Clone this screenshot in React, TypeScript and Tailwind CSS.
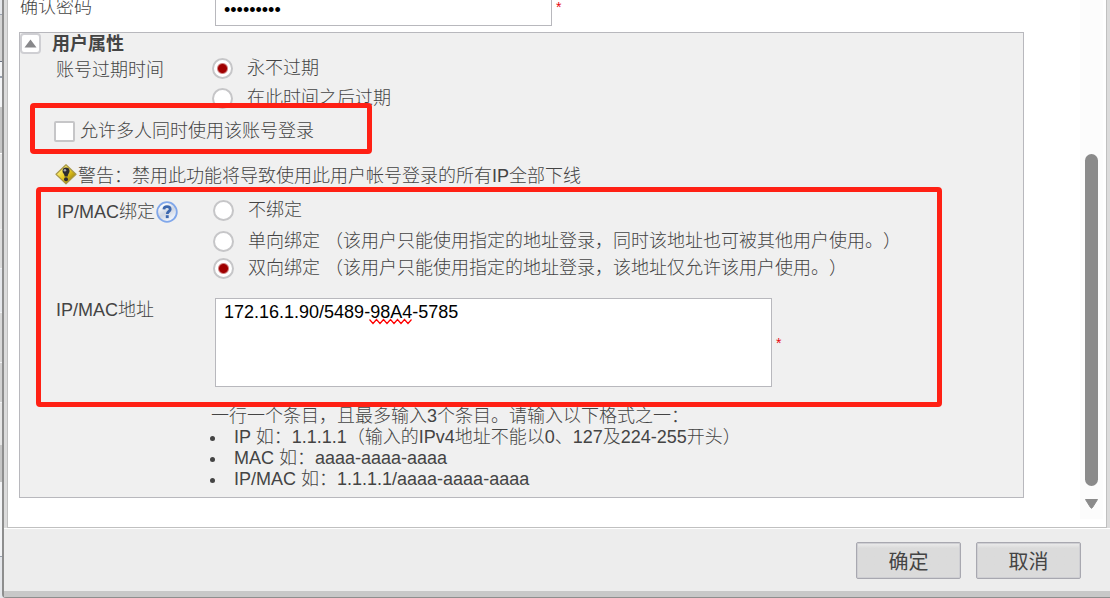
import { ReactNode } from "react";

const backdropRows = [
  "h-[14px] bg-gray-200",
  "h-[47px] bg-[#d4d4d4] border-t border-gray-400",
  "h-[15px] bg-gray-100 border-t border-gray-500",
  "h-[31px] bg-gray-100 border-t-2 border-gray-400",
  "h-[46px] bg-[#c6c6c6]",
  "h-[76px] bg-[#e6e6e6] border-t border-white",
  "h-[39px] bg-[#dcdcdc] border-t border-gray-100",
  "h-[44px] bg-gray-200 border-t border-gray-100",
  "h-[50px] bg-[#d8d8d8] border-t border-gray-100",
  "h-[40px] bg-[#d2d2d2] border-t border-gray-100",
  "h-[43px] bg-[#e6e6e6] border-t border-gray-100",
  "h-[37px] bg-[#c6c6c6]",
  "h-[75px] bg-gray-100 border-b border-gray-400",
];

function Choice({
  name,
  children,
  checked = false,
}: {
  name: string;
  children: ReactNode;
  checked?: boolean;
}) {
  return (
    <label className="flex items-center gap-3.5">
      <input
        type="radio"
        name={name}
        defaultChecked={checked}
        className="size-[21px] shrink-0 appearance-none rounded-full border-2 border-[#c6c6c8] bg-white checked:bg-[radial-gradient(circle,#a00000_4px,#ffffff_6px)]"
      />
      <span>{children}</span>
    </label>
  );
}

function WarningIcon() {
  return (
    <svg width="22" height="22" viewBox="0 0 22 22" aria-hidden="true">
      <defs>
        <linearGradient id="warn" x1="0" y1="0" x2="1" y2="1">
          <stop offset="0.2" stopColor="#fff27a" />
          <stop offset="0.5" stopColor="#e9cb22" />
          <stop offset="0.9" stopColor="#8d7300" />
        </linearGradient>
      </defs>
      <path
        d="M11 0.800 21 10.300 11 19.800 1 10.300Z"
        fill="url(#warn)"
        stroke="#a89848"
        strokeWidth="1.2"
        strokeLinejoin="round"
      />
      <path
        d="M7.500 7C7.500 4.600 9 3.500 11 3.500s3.600 1.100 3.600 3.400c0 2.100-1.700 2.700-2 5.500H9.700C9.500 9.600 7.500 9.200 7.500 7Z"
        fill="#2c2c30"
      />
      <circle cx="11" cy="15.2" r="2" fill="#2c2c30" />
      <circle cx="9.900" cy="6.300" r="1.300" fill="#a5a5ac" />
    </svg>
  );
}

function HelpIcon() {
  return (
    <svg width="22" height="22" viewBox="0 0 22 22" aria-hidden="true">
      <defs>
        <linearGradient id="help" x1="0" y1="0" x2="0.6" y2="1">
          <stop offset="0.2" stopColor="#ffffff" />
          <stop offset="0.6" stopColor="#cfd6e3" />
          <stop offset="1" stopColor="#f4f8ff" />
        </linearGradient>
      </defs>
      <circle cx="11" cy="11" r="9.8" fill="url(#help)" stroke="#80a7ea" strokeWidth="1.800" />
      <path
        d="M7.900 8.300C8 6.500 9.200 5.600 11 5.600c1.900 0 3.200 1 3.200 2.600 0 2.200-2.900 2.200-2.900 4.700"
        fill="none"
        stroke="#3c67ae"
        strokeWidth="2.800"
      />
      <rect x="9.800" y="14.200" width="2.900" height="2.900" fill="#3c67ae" />
    </svg>
  );
}

export default function App() {
  return (
    <div className="flex h-screen overflow-hidden bg-gray-200 font-['Liberation_Sans','Noto_Sans_CJK_SC',sans-serif] text-lg leading-[21px] font-light text-[#444] [text-spacing-trim:space-all]">
      {/* Page behind the dialog */}
      <div className="w-0.5 shrink-0 overflow-hidden" aria-hidden="true">
        {backdropRows.map((row, i) => (
          <div key={i} className={row}></div>
        ))}
      </div>

      <div className="flex min-w-0 flex-1 flex-col rounded-bl border-b border-l-2 border-[#8e8e8e] bg-[#ededed]">
        <div className="flex min-h-0 flex-1 border-x-[3px] border-[#dcdcdc]">
          <div className="flex min-w-0 flex-1 border-x border-b border-[#c0c0c0] bg-white">
            <main className="min-w-0 flex-1 overflow-hidden pr-14 pl-[11px]">
              <div className="-mt-3 flex h-[38px] items-center">
                <label htmlFor="confirm" className="w-[196px] pl-px">
                  确认密码
                </label>
                <input
                  id="confirm"
                  type="password"
                  defaultValue="123456789"
                  className="h-full w-[337px] border border-[#b8b8bd] bg-white px-2 pt-1.5 text-black outline-none"
                />
                <span className="pl-1 text-sm text-red-600">*</span>
              </div>

              <section className="mt-1.5 border border-[#b8b8bd] bg-[#f0f0f0] pb-[7px]">
                <div className="flex h-5 items-center gap-[11px]">
                  <button
                    type="button"
                    aria-label="收起"
                    className="flex size-[21px] items-center justify-center rounded-sm border-2 border-[#cfcfd3] bg-white"
                  >
                    <svg width="13" height="9" viewBox="0 0 13 9">
                      <path d="M6.500 0.500 12.500 8.500H0.500Z" fill="#88888b" />
                    </svg>
                  </button>
                  <h2 className="pt-0.5 font-bold">用户属性</h2>
                </div>

                <div className="flex pl-9">
                  <div className="w-[156px] leading-[34px]">账号过期时间</div>
                  <div className="grid auto-rows-[30px]">
                    <Choice name="expire" checked>
                      永不过期
                    </Choice>
                    <Choice name="expire">在此时间之后过期</Choice>
                  </div>
                </div>

                <div className="relative flex h-9 items-center pl-[34px]">
                  <label className="flex items-center gap-[5px]">
                    <input
                      type="checkbox"
                      className="size-[21px] appearance-none rounded-xs border-2 border-[#c6c6c8] bg-white checked:bg-[#a00000]"
                    />
                    <span>允许多人同时使用该账号登录</span>
                  </label>
                  <div className="pointer-events-none absolute -top-2.5 -bottom-[5px] left-2.5 w-[342px] rounded border-[5px] border-[#ff2014]"></div>
                </div>

                <div className="mt-3 flex h-7 items-center pl-[35px]">
                  <WarningIcon />
                  <p className="pt-0.5 pl-px">警告：禁用此功能将导致使用此用户帐号登录的所有IP全部下线</p>
                </div>

                {/* IP/MAC binding */}
                <div className="relative pt-1.5">
                  <div className="flex pl-[37px]">
                    <div className="flex h-[34px] w-[156px] items-center gap-px">
                      IP/MAC绑定
                      <HelpIcon />
                    </div>
                    <div className="grid grid-rows-[31px_30px_25px]">
                      <Choice name="bind">不绑定</Choice>
                      <Choice name="bind">
                        单向绑定 （该用户只能使用指定的地址登录，同时该地址也可被其他用户使用。）
                      </Choice>
                      <Choice name="bind" checked>
                        双向绑定 （该用户只能使用指定的地址登录，该地址仅允许该用户使用。）
                      </Choice>
                    </div>
                  </div>

                  <div className="mt-[17px] flex pl-9">
                    <label htmlFor="address" className="w-[159px] leading-6">
                      IP/MAC地址
                    </label>
                    <div className="relative">
                      <textarea
                        id="address"
                        spellCheck={false}
                        defaultValue="172.16.1.90/5489-98A4-5785"
                        className="block h-[89px] w-[557px] resize-none border border-[#b8b8bd] bg-white px-2 py-[3px] leading-5 text-black outline-none"
                      />
                      <svg
                        className="pointer-events-none absolute top-5 left-[154px]"
                        width="43"
                        height="7"
                        viewBox="0 0 43 7"
                      >
                        <path
                          d="M0.500 1.500 4 5.500 7.500 1.500 11 5.500 14.500 1.500 18 5.500 21.500 1.500 25 5.500 28.500 1.500 32 5.500 35.500 1.500 39 5.500 42.500 1.500"
                          fill="none"
                          stroke="#ff0000"
                          strokeWidth="1.200"
                        />
                      </svg>
                    </div>
                    <span className="self-center pl-1 text-sm text-red-600">*</span>
                  </div>
                  <div className="pointer-events-none absolute -top-0.5 -bottom-5 left-4 w-[906px] rounded border-[5px] border-[#ff2014]"></div>
                </div>

                <div className="mt-[19px] pl-[191px]">
                  <p>一行一个条目，且最多输入3个条目。请输入以下格式之一：</p>
                  <ul className="list-disc pl-4">
                    <li className="pl-[7px]">
                      IP 如：1.1.1.1（输入的IPv4地址不能以0、127及224-255开头）
                    </li>
                    <li className="pl-[7px]">MAC 如：aaaa-aaaa-aaaa</li>
                    <li className="pl-[7px]">IP/MAC 如：1.1.1.1/aaaa-aaaa-aaaa</li>
                  </ul>
                </div>
              </section>
            </main>

            {/* Scrollbar */}
            <div className="mr-[3px] mb-2 flex w-[23px] flex-col items-center bg-[#fcfcfc] pt-[154px] pb-[9px]">
              <div className="w-[13px] flex-1 rounded-full bg-[#8b8b8b]"></div>
              <svg className="mt-3" width="15" height="12" viewBox="0 0 15 12">
                <path
                  d="M1.500 1.500H13.500L8.500 9.500Q7.500 11 6.500 9.500Z"
                  fill="#8b8b8b"
                  stroke="#8b8b8b"
                  strokeLinejoin="round"
                />
              </svg>
            </div>
          </div>
        </div>

        <footer className="flex h-[69px] items-start justify-end gap-[15px] border-t border-b-[6px] border-t-white border-b-[#c8c8c8] pt-[13px] pr-[29px]">
          {["确定", "取消"].map((text) => (
            <button
              key={text}
              type="button"
              className="h-[37px] w-[105px] rounded-xs border border-[#a8a8b0] bg-[#dbdbdb] bg-linear-to-b from-[#ececec] from-0% to-[#dbdbdb] to-15% pt-0.5 text-xl font-normal shadow-[inset_0_0_0_1px_#cfcfd3]"
            >
              {text}
            </button>
          ))}
        </footer>
      </div>
    </div>
  );
}
